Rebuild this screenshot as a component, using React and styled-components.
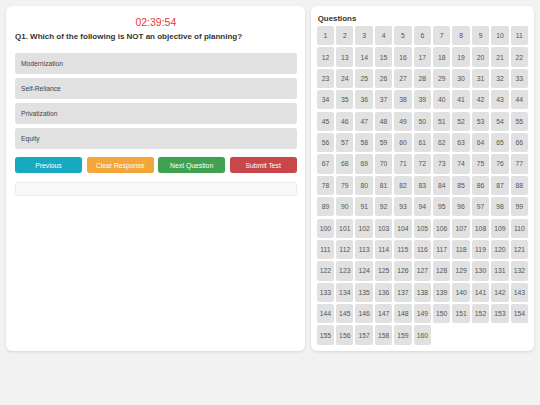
import React from "react";
import styled, { createGlobalStyle } from "styled-components";

const GlobalStyle = createGlobalStyle`
  * { box-sizing: border-box; }
  body {
    margin: 0;
    background: #f2f2f2;
    font-family: "Liberation Sans", Arial, sans-serif;
  }
`;

const options = ["Modernization", "Self-Reliance", "Privatization", "Equity"];

const buttons = [
  { label: "Previous", color: "#17a9c2" },
  { label: "Clear Response", color: "#f3a73b" },
  { label: "Next Question", color: "#40a251" },
  { label: "Submit Test", color: "#c7474a" },
];

const numbers = Array.from({ length: 160 }, (_, i) => i + 1);

function App() {
  return (
    <>
      <GlobalStyle />
      <Page>
        <QuizCard>
          <Timer>02:39:54</Timer>
          <QuestionText>Q1. Which of the following is NOT an objective of planning?</QuestionText>
          <OptionList>
            {options.map((o) => (
              <Option key={o}>{o}</Option>
            ))}
          </OptionList>
          <ButtonRow>
            {buttons.map((b) => (
              <ActionButton key={b.label} $bg={b.color}>
                {b.label}
              </ActionButton>
            ))}
          </ButtonRow>
          <InfoBox />
        </QuizCard>
        <PaletteCard>
          <PaletteTitle>Questions</PaletteTitle>
          <Grid>
            {numbers.map((n) => (
              <Cell key={n}>{n}</Cell>
            ))}
          </Grid>
        </PaletteCard>
      </Page>
    </>
  );
}

export default App;

const Page = styled.div`
  display: flex;
  gap: 6px;
  padding: 6px;
  align-items: stretch;
`;

const Card = styled.div`
  background: #fff;
  border-radius: 6px;
  box-shadow: 0 1px 3px rgba(0, 0, 0, 0.12);
`;

const QuizCard = styled(Card)`
  flex: 4;
  min-width: 0;
  padding: 9px 8px 9px 9px;
`;

const Timer = styled.div`
  text-align: center;
  color: #e53935;
  font-size: 10.5px;
  line-height: 14px;
`;

const QuestionText = styled.h2`
  margin: 2px 0 0;
  font-size: 8px;
  line-height: 12px;
  font-weight: 700;
  color: #333;
`;

const OptionList = styled.div`
  display: flex;
  flex-direction: column;
  gap: 4px;
  margin-top: 10px;
`;

const Option = styled.div`
  background: #e1e1e1;
  border-radius: 3px;
  height: 21px;
  display: flex;
  align-items: center;
  padding-left: 6px;
  font-size: 6.7px;
  color: #444;
`;

const ButtonRow = styled.div`
  display: flex;
  gap: 4.5px;
  margin-top: 8px;
`;

const ActionButton = styled.button`
  flex: 1;
  height: 16px;
  border: none;
  border-radius: 3px;
  background: ${(p) => p.$bg};
  color: #fff;
  font-family: inherit;
  font-size: 6.8px;
  padding: 0;
  box-shadow: 0 0 1px rgba(0, 0, 0, 0.2);
`;

const InfoBox = styled.div`
  margin-top: 9px;
  height: 14px;
  background: #f8f8f8;
  border: 1px solid #ececec;
  border-radius: 3px;
`;

const PaletteCard = styled(Card)`
  flex: 3;
  min-width: 0;
  padding: 6px;
`;

const PaletteTitle = styled.h3`
  margin: 2px 0 0 1px;
  font-size: 7.9px;
  line-height: 10px;
  font-weight: 700;
  color: #333;
`;

const Grid = styled.div`
  display: grid;
  grid-template-columns: repeat(11, 1fr);
  gap: 2.1px 2px;
  margin-top: 2px;
`;

const Cell = styled.div`
  height: 19.3px;
  background: #e1e1e1;
  border-radius: 2px;
  display: flex;
  align-items: center;
  justify-content: center;
  font-size: 6.8px;
  color: #555;
`;
